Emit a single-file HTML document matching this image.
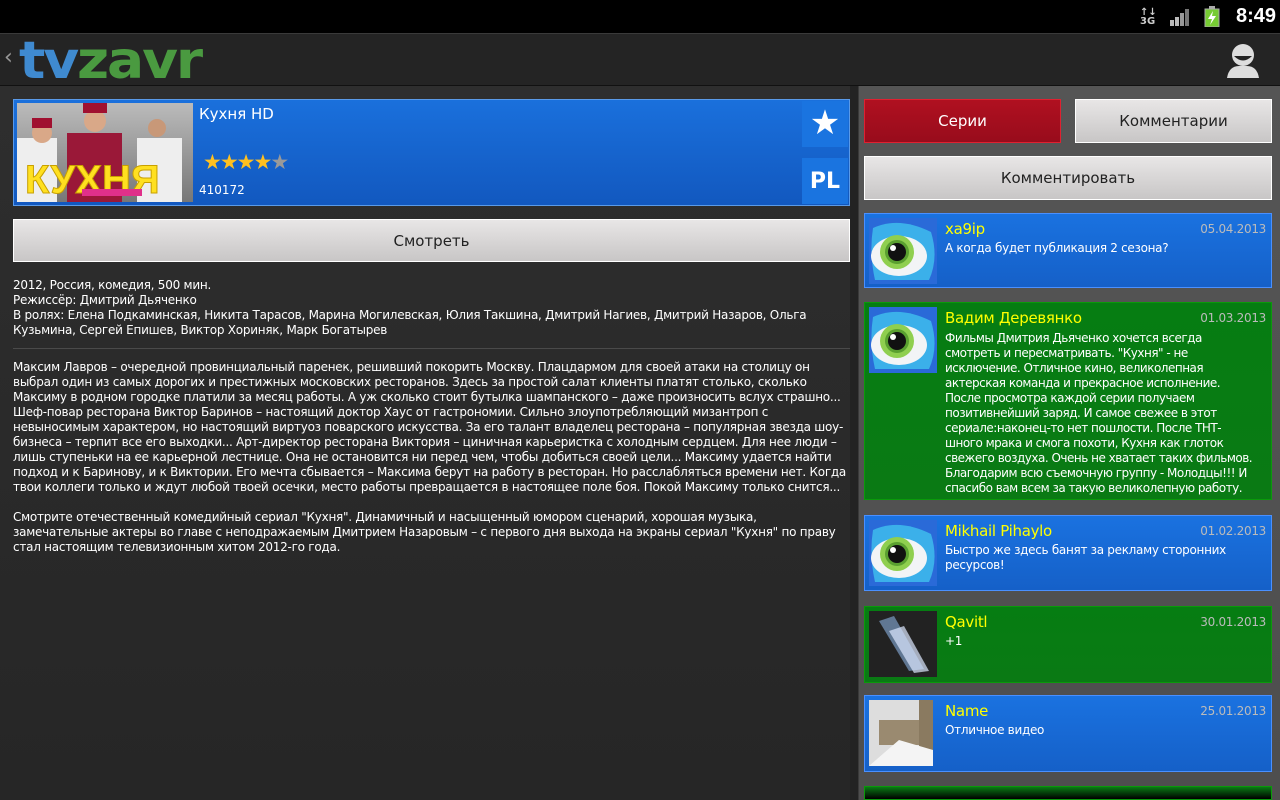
<!DOCTYPE html>
<html><head><meta charset="utf-8"><style>
*{margin:0;padding:0;box-sizing:border-box}
html,body{width:1280px;height:800px;overflow:hidden}
body{background:#2b2b2b;font-family:"DejaVu Sans","Liberation Sans",sans-serif;color:#fff;position:relative}
.abs{position:absolute}
#status{left:0;top:0;width:1280px;height:33px;background:#000}
#bar{left:0;top:33px;width:1280px;height:53px;background:#242424;border-top:1px solid #3a3a3a;border-bottom:1px solid #111}
#left{left:0;top:86px;width:858px;height:714px;background:linear-gradient(#2e2e2e,#262626)}
#right{left:858px;top:86px;width:422px;height:714px;background:linear-gradient(#555,#4e4e4e);border-left:1px solid #3a3a3a}
.btn{background:linear-gradient(#e8e6e6,#c8c6c6);border:1px solid #fff;color:#222;text-align:center;font-size:15px}
.t{font-size:12px;line-height:15px;white-space:nowrap;letter-spacing:-0.25px}
.cm{position:absolute;left:864px;width:408px;border:1px solid #4a90ff;background:linear-gradient(#1a72e0,#1560c8);overflow:hidden}
.cm.g{border-color:#0a9a0a;background:linear-gradient(#067d12,#0a7a14)}
.cm .nm{position:absolute;left:80px;top:6px;color:#ff0;font-size:15px;letter-spacing:-0.3px}
.cm .dt{position:absolute;right:5px;top:8px;color:#bbb;font-size:12px;letter-spacing:-0.3px}
.cm .tx{position:absolute;left:80px;top:27px;font-size:12px;line-height:15px;white-space:nowrap;letter-spacing:-0.3px}
.cm svg{position:absolute;left:4px;top:4px}
</style></head><body>
<div id="status" class="abs">
 <div class="abs" style="left:1140px;top:8px;font-size:10px;font-weight:bold;color:#ccc;line-height:9px">↑↓<br>3G</div>
 <svg class="abs" style="left:1170px;top:8px" width="22" height="18"><rect x="0" y="12" width="4" height="6" fill="#bbb"/><rect x="5" y="9" width="4" height="9" fill="#bbb"/><rect x="10" y="5" width="4" height="13" fill="#999"/><rect x="15" y="1" width="4" height="17" fill="#777"/></svg>
 <svg class="abs" style="left:1204px;top:6px" width="16" height="21"><rect x="5" y="0" width="6" height="3" fill="#aaa"/><rect x="1" y="3" width="14" height="18" fill="#7c3" stroke="#aaa"/><path d="M9 5 L4 13 H8 L6 19 L12 10 H8 Z" fill="#fff"/></svg>
 <div class="abs" style="left:1236px;top:5px;font-size:20px;font-weight:bold;font-family:'Liberation Sans',sans-serif">8:49</div>
</div>
<div id="bar" class="abs">
 <div class="abs" style="left:4px;top:11px;color:#999;font-size:22px">‹</div>
 <div class="abs" style="left:19px;top:-3px;font-family:'DejaVu Sans',sans-serif;font-weight:bold;font-size:52px;letter-spacing:-2px;line-height:60px;transform:scaleX(1.06);transform-origin:left"><span style="color:#3f8ad0">tv</span><span style="color:#4a9a40">zavr</span></div>
 <svg class="abs" style="left:1225px;top:9px" width="36" height="36"><circle cx="18" cy="12" r="11" fill="#ddd"/><path d="M9 13 Q18 22 27 13 Z" fill="#222"/><path d="M2 35 Q4 23 14 23 H22 Q32 23 34 35 Z" fill="#ddd"/></svg>
</div>
<div id="left" class="abs"></div>
<div id="right" class="abs"></div>
<div class="abs" style="left:850px;top:86px;width:8px;height:714px;background:#232323"></div>

<div class="abs" style="left:13px;top:99px;width:837px;height:107px;border:1px solid #5a9ae8;background:linear-gradient(#1a70dc,#1258bf)"></div>
<svg class="abs" style="left:17px;top:103px" width="176" height="99"><defs><linearGradient id="k" x1="0" y1="0" x2="0" y2="1"><stop offset="0" stop-color="#bbb"/><stop offset="1" stop-color="#777"/></linearGradient></defs><rect width="176" height="99" fill="url(#k)"/><rect x="0" y="35" width="40" height="64" fill="#eee"/><rect x="50" y="30" width="55" height="69" fill="#9a1838"/><circle cx="25" cy="30" r="10" fill="#d9a888"/><rect x="15" y="15" width="20" height="10" fill="#a01030"/><circle cx="78" cy="18" r="11" fill="#d9a888"/><rect x="66" y="0" width="24" height="10" fill="#a01030"/><circle cx="140" cy="25" r="9" fill="#c89878"/><rect x="120" y="35" width="45" height="64" fill="#eee"/><text x="8" y="90" font-size="40" font-weight="bold" fill="#ffe020" stroke="#c8a000" font-family="Liberation Sans">КУХНЯ</text><rect x="65" y="86" width="60" height="7" fill="#e0308a"/></svg>
<div class="abs" style="left:199px;top:105px;font-size:15px">Кухня HD</div>
<div class="abs" style="left:203px;top:150px;font-size:21px;letter-spacing:-2px;color:#ffc020">★★★★<span style="color:#999">★</span></div>
<div class="abs" style="left:199px;top:183px;font-size:12px">410172</div>
<div class="abs" style="left:802px;top:101px;width:46px;height:46px;background:#1a74e0;color:#fff;font-size:34px;text-align:center;line-height:44px">★</div>
<div class="abs" style="left:802px;top:158px;width:46px;height:46px;background:#1a74e0;color:#fff;font-size:22px;font-weight:bold;text-align:center;line-height:48px">PL</div>
<div class="abs btn" style="left:13px;top:219px;width:837px;height:43px;line-height:43px">Смотреть</div>

<div class="abs t" style="left:13px;top:278px">2012, Россия, комедия, 500 мин.<br>Режиссёр: Дмитрий Дьяченко<br>В ролях: Елена Подкаминская, Никита Тарасов, Марина Могилевская, Юлия Такшина, Дмитрий Нагиев, Дмитрий Назаров, Ольга<br>Кузьмина, Сергей Епишев, Виктор Хориняк, Марк Богатырев</div>
<div class="abs" style="left:13px;top:348px;width:837px;height:1px;background:#4a4a4a"></div>
<div class="abs t" style="left:13px;top:360px">Максим Лавров – очередной провинциальный паренек, решивший покорить Москву. Плацдармом для своей атаки на столицу он<br>выбрал один из самых дорогих и престижных московских ресторанов. Здесь за простой салат клиенты платят столько, сколько<br>Максиму в родном городке платили за месяц работы. А уж сколько стоит бутылка шампанского – даже произносить вслух страшно...<br>Шеф-повар ресторана Виктор Баринов – настоящий доктор Хаус от гастрономии. Сильно злоупотребляющий мизантроп с<br>невыносимым характером, но настоящий виртуоз поварского искусства. За его талант владелец ресторана – популярная звезда шоу-<br>бизнеса – терпит все его выходки... Арт-директор ресторана Виктория – циничная карьеристка с холодным сердцем. Для нее люди –<br>лишь ступеньки на ее карьерной лестнице. Она не остановится ни перед чем, чтобы добиться своей цели... Максиму удается найти<br>подход и к Баринову, и к Виктории. Его мечта сбывается – Максима берут на работу в ресторан. Но расслабляться времени нет. Когда<br>твои коллеги только и ждут любой твоей осечки, место работы превращается в настоящее поле боя. Покой Максиму только снится...<br><br>Смотрите отечественный комедийный сериал "Кухня". Динамичный и насыщенный юмором сценарий, хорошая музыка,<br>замечательные актеры во главе с неподражаемым Дмитрием Назаровым – с первого дня выхода на экраны сериал "Кухня" по праву<br>стал настоящим телевизионным хитом 2012-го года.</div>

<div class="abs" style="left:864px;top:99px;width:197px;height:44px;background:linear-gradient(#b01020,#980c1c);border:1px solid #e02030;text-align:center;line-height:42px;font-size:15px">Серии</div>
<div class="abs btn" style="left:1075px;top:99px;width:197px;height:44px;line-height:42px">Комментарии</div>
<div class="abs btn" style="left:864px;top:156px;width:408px;height:44px;line-height:42px">Комментировать</div>

<svg width="0" height="0" style="position:absolute"><defs><g id="eye"><rect width="68" height="66" fill="#2a6ad8"/><path d="M4 10 Q30 -2 62 14 Q70 40 60 62 L6 62 Q0 35 4 10Z" fill="#3bb0ea"/><ellipse cx="30" cy="38" rx="28" ry="20" fill="#f2f4f6"/><circle cx="28" cy="34" r="17" fill="#8fcf4f"/><circle cx="28" cy="34" r="12" fill="#5aa030"/><circle cx="28" cy="34" r="9" fill="#111"/><circle cx="24" cy="30" r="3" fill="#fff"/></g></defs></svg>

<div class="cm" style="top:213px;height:75px"><svg width="68" height="66"><use href="#eye"/></svg><div class="nm">xa9ip</div><div class="dt">05.04.2013</div><div class="tx">А когда будет публикация 2 сезона?</div></div>
<div class="cm g" style="top:302px;height:198px"><svg width="68" height="66"><use href="#eye"/></svg><div class="nm">Вадим Деревянко</div><div class="dt">01.03.2013</div><div class="tx" style="top:28px;letter-spacing:-0.5px">Фильмы Дмитрия Дьяченко хочется всегда<br>смотреть и пересматривать. "Кухня" - не<br>исключение. Отличное кино, великолепная<br>актерская команда и прекрасное исполнение.<br>После просмотра каждой серии получаем<br>позитивнейший заряд. И самое свежее в этот<br>сериале:наконец-то нет пошлости. После ТНТ-<br>шного мрака и смога похоти, Кухня как глоток<br>свежего воздуха. Очень не хватает таких фильмов.<br>Благодарим всю съемочную группу - Молодцы!!! И<br>спасибо вам всем за такую великолепную работу.</div></div>
<div class="cm" style="top:515px;height:76px"><svg width="68" height="66"><use href="#eye"/></svg><div class="nm">Mikhail Pihaylo</div><div class="dt">01.02.2013</div><div class="tx">Быстро же здесь банят за рекламу сторонних<br>ресурсов!</div></div>
<div class="cm g" style="top:606px;height:77px"><svg width="68" height="66"><rect width="68" height="66" fill="#222"/><path d="M10 10 L40 60 L55 58 L25 5Z" fill="#8ab0e0" opacity=".6"/><path d="M20 20 L45 62 L60 60 L35 15Z" fill="#dde8ff" opacity=".7"/></svg><div class="nm">Qavitl</div><div class="dt">30.01.2013</div><div class="tx">+1</div></div>
<div class="cm" style="top:695px;height:77px"><svg width="64" height="66"><rect width="64" height="66" fill="#ddd"/><rect x="10" y="20" width="40" height="25" fill="#9a8a70"/><rect x="50" y="0" width="14" height="50" fill="#8a7a60"/><path d="M0 66 L30 40 L64 50 V66Z" fill="#f4f4f4"/></svg><div class="nm">Name</div><div class="dt">25.01.2013</div><div class="tx">Отличное видео</div></div>
<div class="cm g" style="top:786px;height:14px;background:linear-gradient(#0a7a14,#000)"></div>
</body></html>
